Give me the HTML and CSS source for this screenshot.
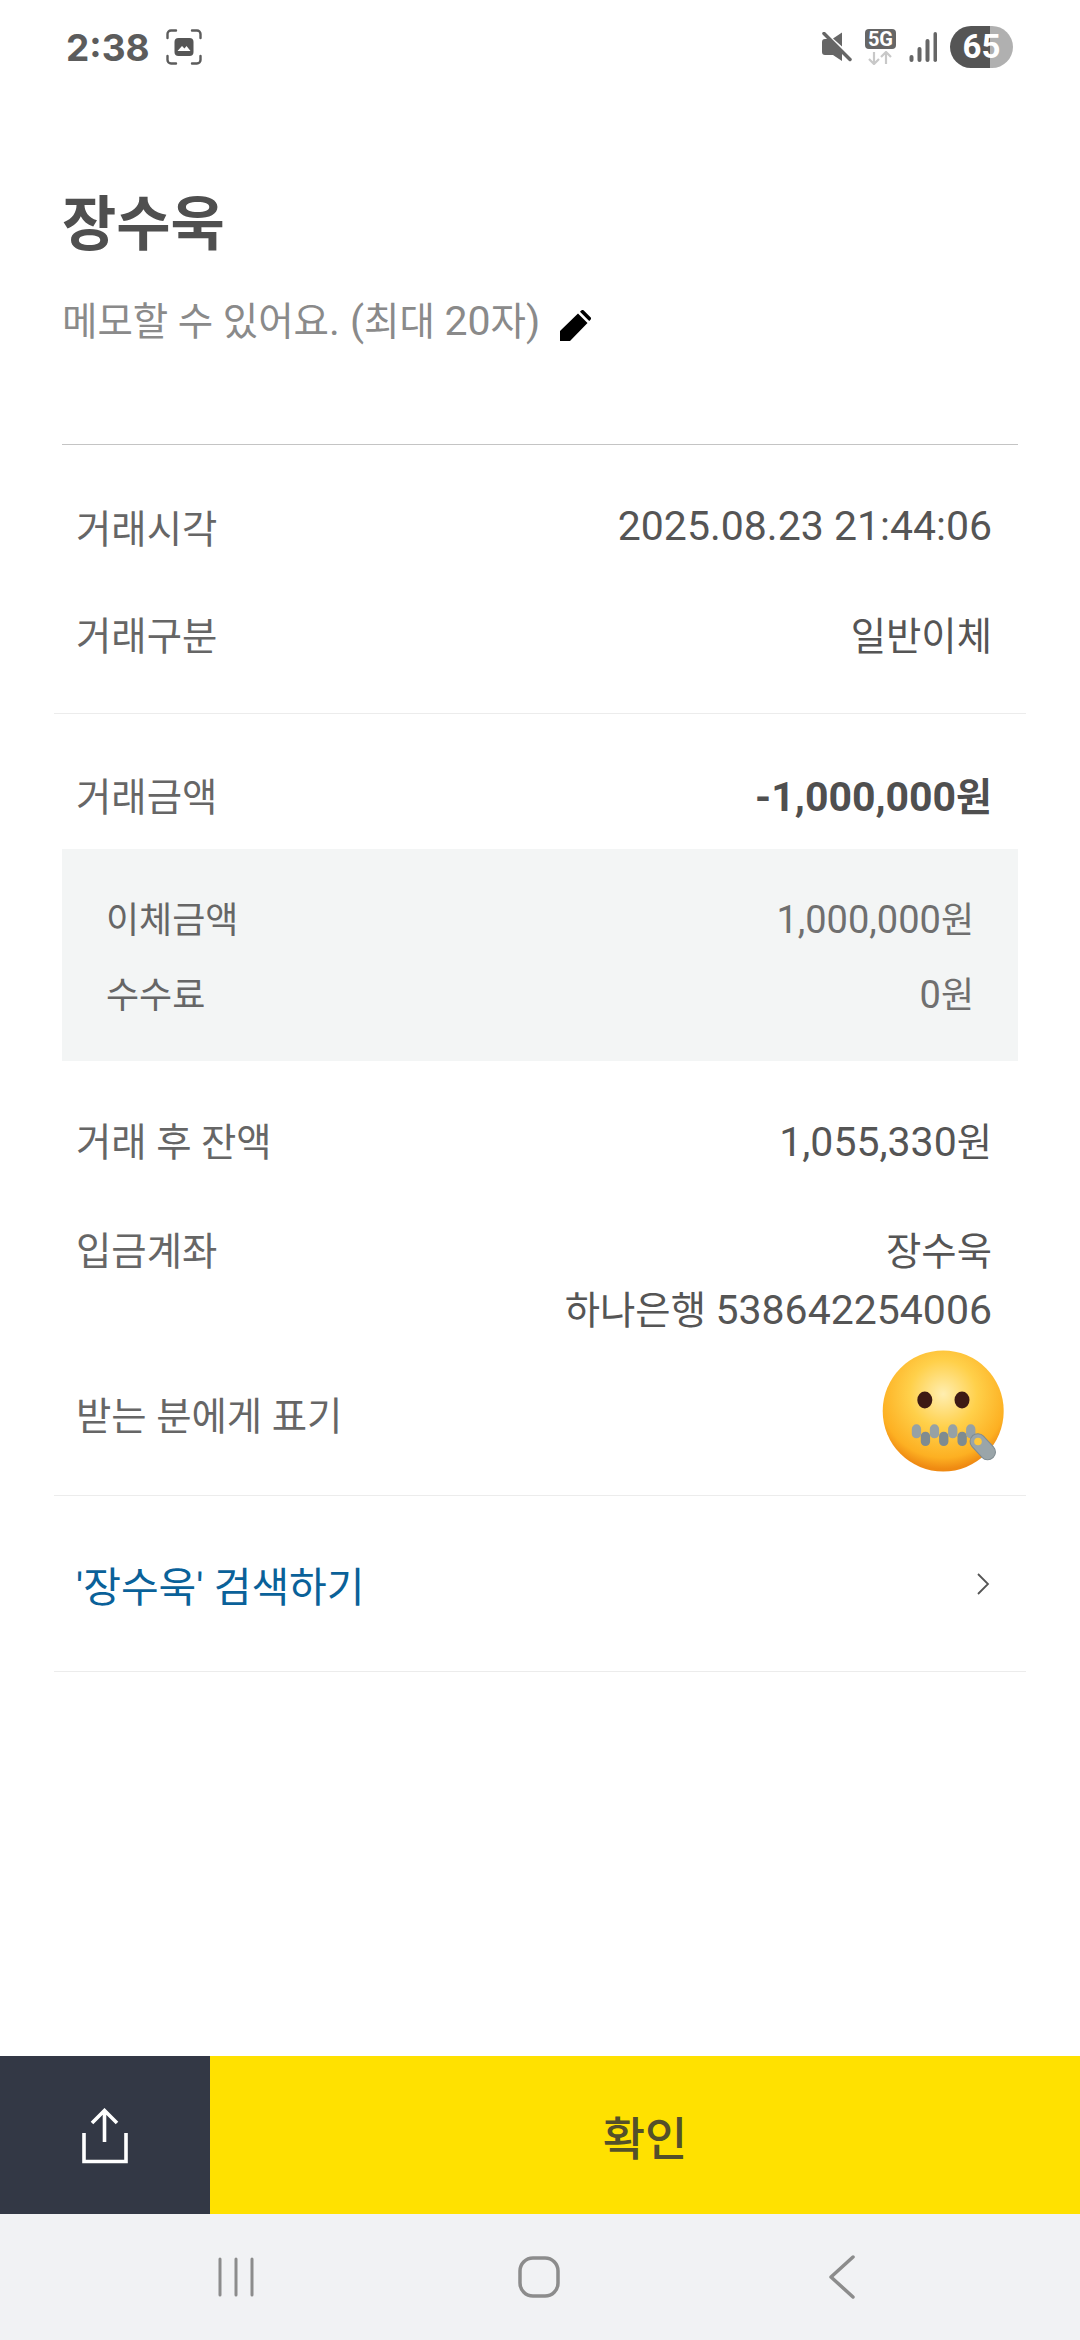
FILE: index.html
```html
<!DOCTYPE html>
<html lang="ko">
<head>
<meta charset="utf-8">
<title>거래내역</title>
<link rel="stylesheet" href="styles.css">
</head>
<body>
<div class="app">
  <header class="status">
    <div class="status-left">
      <span class="clock">2:38</span>
      <svg class="shot" viewBox="0 0 36 36" width="36" height="36" fill="none">
        <path d="M1.500 9V5a3.500 3.500 0 0 1 3.500-3.500h5M26 1.500h5A3.500 3.500 0 0 1 34.500 5v4M34.500 27v4a3.500 3.500 0 0 1-3.500 3.500h-5M10 34.500H5A3.500 3.500 0 0 1 1.500 31v-4" stroke="#5c5c5c" stroke-width="2.400" stroke-linecap="round"/>
        <rect x="8.500" y="9" width="19" height="18" rx="4" fill="#565656"/>
        <path d="M11.500 22l4.500-5 2.500 2.500 2-2.500 4 5z" fill="#fff"/>
      </svg>
    </div>
    <div class="status-right">
      <svg class="mute" viewBox="0 0 30 30" width="30" height="30" fill="#666">
        <path d="M3 7h4l13 13v9l-9-6H3a3 3 0 0 1-3-3V10a3 3 0 0 1 3-3zM11 6.500l9-6v14z"/>
        <path d="M2 1.500l26 26" stroke="#666" stroke-width="3.500" stroke-linecap="round"/>
      </svg>
      <div class="net">
        <span class="net-label">5G</span>
        <svg viewBox="0 0 30 14" width="30" height="14" fill="none" stroke="#c8c8c8" stroke-width="2.200">
          <path d="M9 1v12M4 8l5 5 5-5M21 13V1M16 6l5-5 5 5"/>
        </svg>
      </div>
      <svg class="signal" viewBox="0 0 28 30" width="28" height="30" fill="#666">
        <rect x="0.500" y="23" width="4" height="7" rx="2"/>
        <rect x="8.500" y="15" width="4" height="15" rx="2"/>
        <rect x="16.500" y="7" width="4" height="23" rx="2"/>
        <rect x="24.500" y="0" width="3.500" height="30" rx="1.750"/>
      </svg>
      <div class="battery">65</div>
    </div>
  </header>

  <main class="content">
    <section class="title-block">
      <h1 class="name">장수욱</h1>
      <div class="memo">
        <span>메모할 수 있어요<span class="latin">. (</span>최대 <span class="latin">20</span>자<span class="latin">)</span></span>
        <svg class="pencil" viewBox="0 0 31 31" width="31" height="31" fill="#000">
          <path d="M0 31V21L18 3.500 27.500 13 10 31zM20 1.800l1.300-1.300a1.800 1.800 0 0 1 2.500 0l6.700 6.700a1.800 1.800 0 0 1 0 2.500L29.200 11z"/>
        </svg>
      </div>
    </section>

    <section class="group group-first">
      <div class="row"><span class="label">거래시각</span><span class="num">2025.08.23 21:44:06</span></div>
      <div class="row"><span class="label">거래구분</span><span>일반이체</span></div>
    </section>

    <section class="group group-amount">
      <div class="row"><span class="label">거래금액</span><strong class="amount"><span class="num">-1,000,000</span>원</strong></div>
      <div class="detail">
        <div class="detail-row"><span>이체금액</span><span class="detail-value"><span class="detail-num">1,000,000</span>원</span></div>
        <div class="detail-row"><span>수수료</span><span class="detail-value"><span class="detail-num">0</span>원</span></div>
      </div>
      <div class="row row-balance"><span class="label">거래 후 잔액</span><span><span class="num">1,055,330</span>원</span></div>
      <div class="row row-account">
        <span class="label">입금계좌</span>
        <span class="account">장수욱<br>하나은행 <span class="num">538642254006</span></span>
      </div>
      <div class="row row-emoji">
        <span class="label">받는 분에게 표기</span>
        <svg class="emoji" viewBox="0 0 124 124" width="124" height="124" role="img" aria-label="지퍼 입 얼굴">
          <defs>
            <radialGradient id="face" cx="50%" cy="36%" r="62%">
              <stop offset="0" stop-color="#ffeeb0"/>
              <stop offset="0.45" stop-color="#ffd04a"/>
              <stop offset="0.85" stop-color="#fdb022"/>
              <stop offset="1" stop-color="#ef8a12"/>
            </radialGradient>
          </defs>
          <circle cx="61.200" cy="62" r="60.500" fill="url(#face)"/>
          <ellipse cx="42.800" cy="51" rx="7.500" ry="8.500" fill="#3d1a14"/>
          <ellipse cx="80" cy="51" rx="7.500" ry="8.500" fill="#3d1a14"/>
          <g fill="#7f8b90">
            <rect x="38.800" y="82.700" width="9.300" height="14.300" rx="4.600"/>
            <rect x="57.100" y="82.700" width="9.300" height="14.300" rx="4.600"/>
            <rect x="75.500" y="82.700" width="9.300" height="14.300" rx="4.600"/>
          </g>
          <g fill="#96a1a5">
            <rect x="29.800" y="75.300" width="9.300" height="14" rx="4.600"/>
            <rect x="47.800" y="75.300" width="9.300" height="14" rx="4.600"/>
            <rect x="66.100" y="75.300" width="9.300" height="14" rx="4.600"/>
            <rect x="84.100" y="75.300" width="9.300" height="14" rx="4.600"/>
          </g>
          <rect class="emoji-tab" x="85.800" y="90" width="30" height="15.500" rx="7.700" transform="rotate(47 100.800 97.700)"/>
          <circle cx="96" cy="92.500" r="3.800" fill="#ffc83a"/>
        </svg>
      </div>
    </section>

    <section class="search-row">
      <span class="search-text">'장수욱' 검색하기</span>
      <svg viewBox="0 0 14 24" width="14" height="24" fill="none" stroke="#555" stroke-width="1.800"><path d="M2 2l10 10L2 22"/></svg>
    </section>
  </main>

  <div class="actions">
    <button class="share" aria-label="공유">
      <svg class="share-icon" viewBox="0 0 46 56" width="46" height="56" fill="none" stroke="#fff" stroke-width="3.600">
        <path d="M22.500 34V3M10 15L22.500 2.500 35 15M2 25v28.500h42V25"/>
      </svg>
    </button>
    <button class="confirm">확인</button>
  </div>

  <nav class="navbar">
    <svg viewBox="0 0 36 40" width="36" height="40" fill="none" stroke="#8c8c8c" stroke-width="3" stroke-linecap="round"><path d="M2 2v36M18 2v36M34 2v36"/></svg>
    <svg viewBox="0 0 42 42" width="42" height="42" fill="none" stroke="#8c8c8c" stroke-width="3.500"><rect x="2" y="2" width="38" height="38" rx="13"/></svg>
    <svg viewBox="0 0 28 44" width="28" height="44" fill="none" stroke="#8c8c8c" stroke-width="3.500" stroke-linecap="round" stroke-linejoin="round"><path d="M25 2L3 22l22 20"/></svg>
  </nav>
</div>
</body>
</html>
```
FILE: styles.css
```css
* { box-sizing: border-box; }
html, body { margin: 0; padding: 0; }
body {
  background: #fff;
  font-family: Roboto, "Noto Sans CJK KR", sans-serif;
  color: #555;
}
.app {
  width: 1080px;
  height: 2340px;
  display: flex;
  flex-direction: column;
  overflow: hidden;
}
.status {
  height: 92px;
  flex: none;
  display: flex;
  justify-content: space-between;
  align-items: center;
  padding: 2px 0 0 66px;
}
.status-left { display: flex; align-items: center; gap: 16px; }
.clock { font-size: 37px; font-weight: 700; color: #5c5c5c; font-family: Inter, Roboto, sans-serif; }
.status-right { display: flex; align-items: center; gap: 13px; padding-right: 67px; }
.net { display: flex; flex-direction: column; align-items: center; gap: 2px; }
.net-label {
  background: #666;
  color: #fff;
  font-size: 20px;
  font-weight: 700;
  line-height: 20px;
  padding: 0 3px;
  border-radius: 4px;
}
.battery {
  width: 63px;
  height: 42px;
  border-radius: 21px;
  background: linear-gradient(90deg, #555 0 40px, #b0b0b0 40px);
  color: #fff;
  font-size: 33px;
  font-weight: 700;
  line-height: 42px;
  text-align: center;
}
.content { flex: 1; display: flex; flex-direction: column; }
.title-block {
  margin: 0 62px;
  padding: 93px 0 0;
  height: 353px;
  border-bottom: 1px solid #c4c4c4;
}
.name {
  margin: 0;
  font-size: 59px;
  line-height: 80px;
  font-weight: 700;
  color: #4f4f4f;
}
.memo {
  margin-top: 28px;
  display: flex;
  align-items: center;
  gap: 20px;
  font-size: 38.500px;
  line-height: 56px;
  color: #8a8a8a;
}
.pencil { margin-top: 8px; flex: none; }
.latin { font-size: 41px; }
.group { margin: 0 54px; border-bottom: 1px solid #ececec; }
.group-first { height: 269px; padding-top: 27px; }
.group-first .row { height: 107px; }
.group-amount { height: 782px; padding-top: 25px; }
.row {
  display: flex;
  justify-content: space-between;
  align-items: center;
  height: 108px;
  padding: 0 34px 0 22px;
  font-size: 38.400px;
  color: #555;
}
.label { color: #666; }
.num { font-size: 41px; }
.group-amount > .row:first-child { height: 110px; }
.amount { font-size: 39px; font-weight: 700; color: #4f4f4f; }
.detail {
  margin: 0 8px;
  height: 212px;
  background: #f3f5f5;
  padding: 30px 44px 0;
  display: flex;
  flex-direction: column;
}
.detail-row {
  display: flex;
  justify-content: space-between;
  align-items: center;
  height: 75px;
  font-size: 36px;
  color: #666;
}
.detail-value { color: #6f6f6f; }
.detail-num { font-size: 38px; }
.row-balance { margin-top: 23px; height: 109px; }
.row-account { align-items: flex-start; height: 155px; padding-top: 30px; line-height: 58px; }
.account { text-align: right; }
.row-emoji { height: 130px; }
.emoji { margin: -5px -14px 0 0; flex: none; }
.emoji-tab { fill: #9aa5a9; stroke: #7f8b90; stroke-width: 1; }
.search-row {
  margin: 0 54px;
  height: 176px;
  display: flex;
  align-items: center;
  justify-content: space-between;
  padding: 0 36px 0 22px;
  border-bottom: 1px solid #ececec;
}
.search-text { font-size: 41px; color: #0a6199; }
.actions {
  margin-top: auto;
  height: 158px;
  flex: none;
  display: flex;
}
.share {
  width: 210px;
  border: 0;
  background: #333845;
  display: flex;
  align-items: center;
  justify-content: center;
  padding: 0;
}
.share-icon { margin-top: 2px; }
.confirm {
  flex: 1;
  border: 0;
  background: #ffe100;
  color: #54502a;
  font-family: inherit;
  font-size: 46px;
  font-weight: 500;
  padding: 0;
}
.navbar {
  height: 126px;
  flex: none;
  background: #f1f2f4;
  display: grid;
  grid-template-columns: repeat(3, 303px);
  justify-items: center;
  align-items: center;
  padding-left: 84px;
}
```
